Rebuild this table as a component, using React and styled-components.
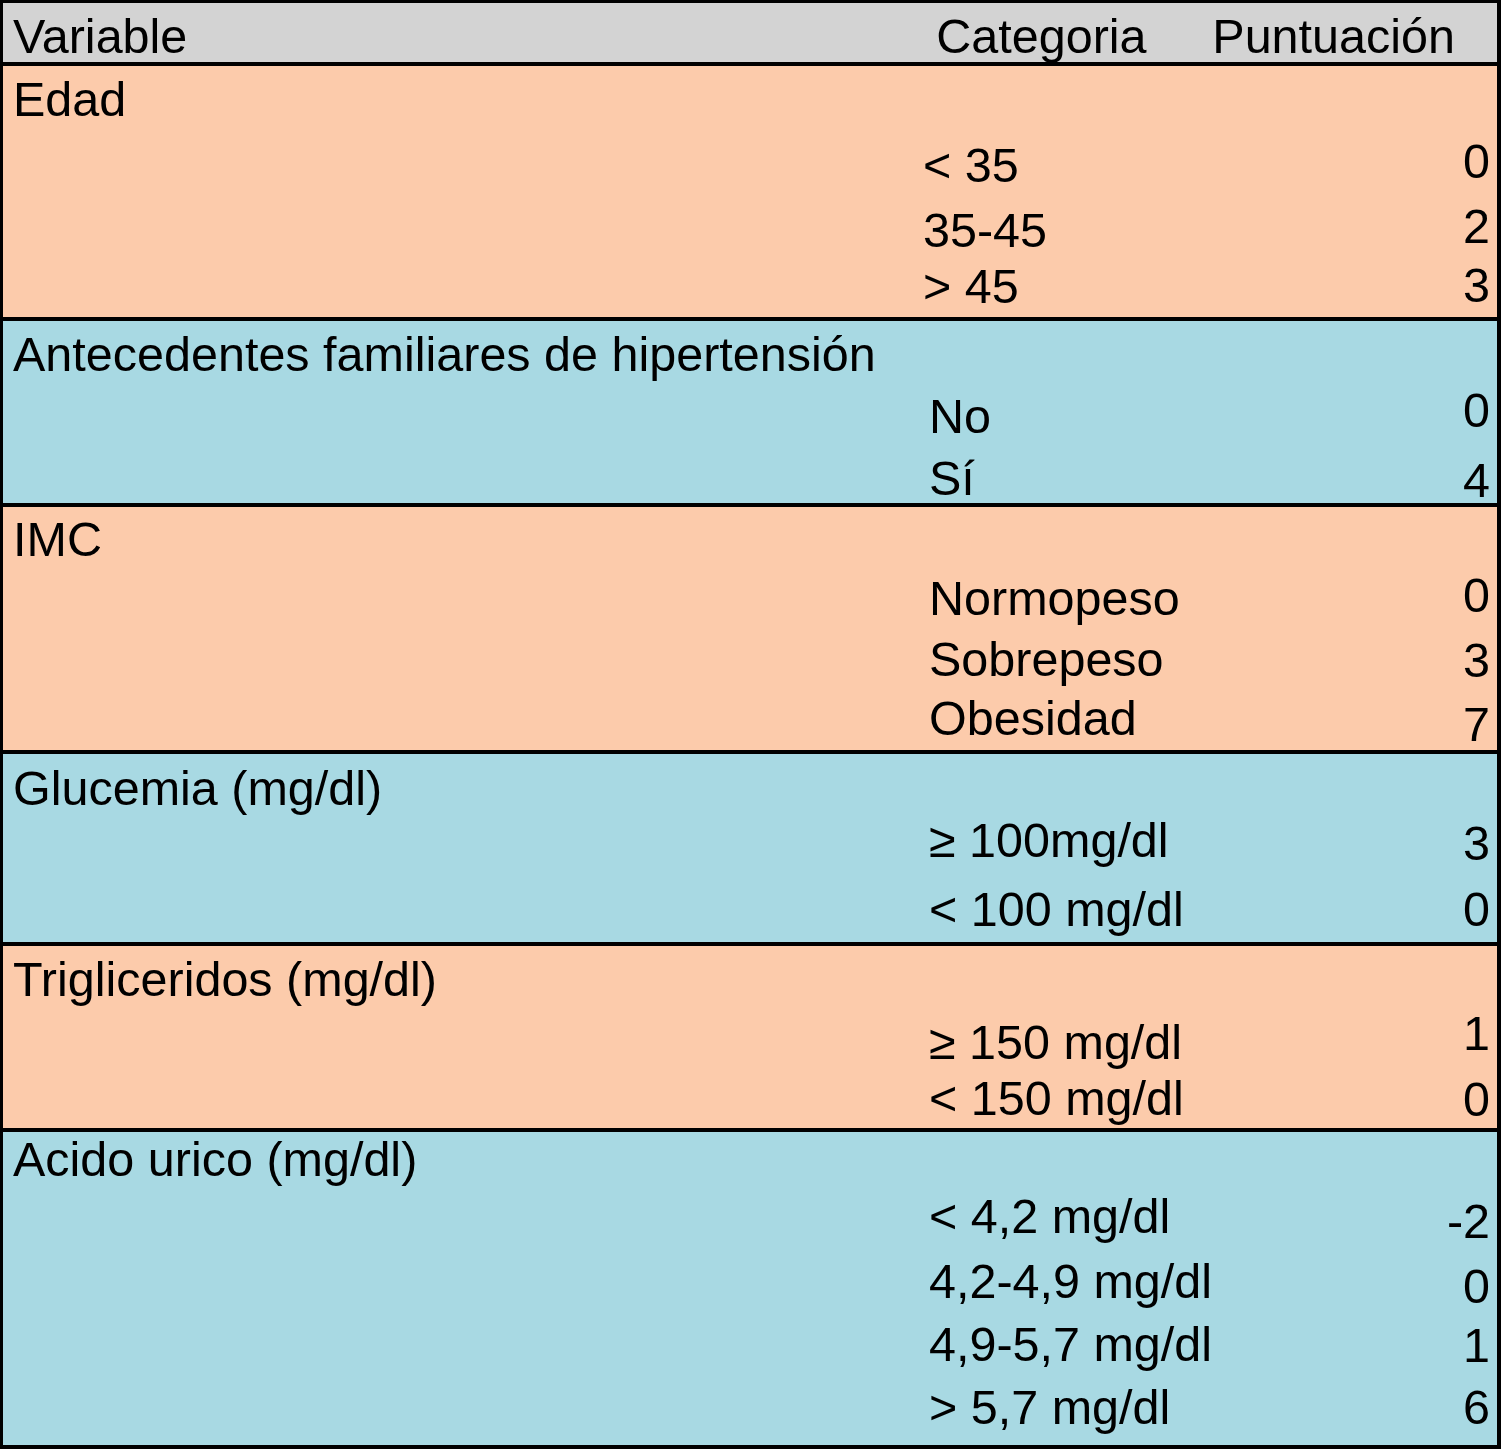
import React from 'react';
import styled, { createGlobalStyle } from 'styled-components';

const GlobalStyle = createGlobalStyle`
  html, body {
    margin: 0;
    padding: 0;
    background: #ffffff;
  }
  body {
    font-family: "Liberation Sans", Arial, Helvetica, sans-serif;
  }
`;

const PEACH = '#fccbab';
const BLUE = '#a8d9e3';

const Table = styled.div`
  width: 1501px;
  box-sizing: border-box;
  border: 4px solid #000;
  border-top-width: 3px;
  border-left-width: 3px;
  color: #000;
  font-size: 48.5px;
  line-height: 46px;
`;

const Header = styled.div`
  display: grid;
  grid-template-columns: 1fr 276px auto;
  height: 63px;
  box-sizing: border-box;
  padding: 10px 42px 0 10px;
  background: #d3d3d3;
  border-bottom: 4px solid #000;
`;

const HeadCell = styled.div`
  white-space: nowrap;
`;

const Section = styled.div`
  height: ${p => p.$height}px;
  background: ${p => p.$bg};
  border-bottom: ${p => (p.$last ? 'none' : '4px solid #000')};
  overflow: hidden;
  display: flex;
  flex-direction: column;
`;

const Title = styled.div`
  margin-top: ${p => p.$top}px;
  padding-left: 10px;
  height: 46px;
  white-space: nowrap;
`;

const Row = styled.div`
  display: flex;
  justify-content: space-between;
  align-items: flex-start;
  height: 46px;
  margin-top: ${p => p.$top}px;
  padding-left: ${p => p.$catX}px;
  padding-right: 7px;
`;

const Category = styled.span`
  white-space: nowrap;
`;

const Score = styled.span`
  margin-top: ${p => p.$shift}px;
`;

const BASE = 40;

const sections = [
  {
    name: 'Edad', bg: PEACH, height: 251, title: 50, catX: 920,
    rows: [['< 35', '0', 116, -4], ['35-45', '2', 181, -4], ['> 45', '3', 237, -1]],
  },
  {
    name: 'Antecedentes familiares de hipertensión', bg: BLUE, height: 182, title: 50, catX: 926,
    rows: [['No', '0', 112, -6], ['Sí', '4', 174, 2]],
  },
  {
    name: 'IMC', bg: PEACH, height: 243, title: 49, catX: 926,
    rows: [['Normopeso', '0', 108, -3], ['Sobrepeso', '3', 169, 1], ['Obesidad', '7', 228, 6]],
  },
  {
    name: 'Glucemia (mg/dl)', bg: BLUE, height: 188, title: 51, catX: 926,
    rows: [['≥ 100mg/dl', '3', 103, 3], ['< 100 mg/dl', '0', 172, 0]],
  },
  {
    name: 'Trigliceridos (mg/dl)', bg: PEACH, height: 182, title: 50, catX: 926,
    rows: [['≥ 150 mg/dl', '1', 113, -9], ['< 150 mg/dl', '0', 169, 1]],
  },
  {
    name: 'Acido urico (mg/dl)', bg: BLUE, height: 313, title: 44, catX: 926,
    rows: [
      ['< 4,2 mg/dl', '-2', 101, 5],
      ['4,2-4,9 mg/dl', '0', 166, 5],
      ['4,9-5,7 mg/dl', '1', 229, 1],
      ['> 5,7 mg/dl', '6', 292, 0],
    ],
  },
];

const App = () => (
  <>
    <GlobalStyle />
    <Table>
      <Header>
        <HeadCell>Variable</HeadCell>
        <HeadCell>Categoria</HeadCell>
        <HeadCell>Puntuación</HeadCell>
      </Header>
      {sections.map((s, i) => {
        let prev = s.title;
        return (
          <Section key={s.name} $bg={s.bg} $height={s.height} $last={i === sections.length - 1}>
            <Title $top={s.title - BASE}>{s.name}</Title>
            {s.rows.map(([cat, score, baseline, shift]) => {
              const top = baseline - prev - 46;
              prev = baseline;
              return (
                <Row key={cat} $top={top} $catX={s.catX}>
                  <Category>{cat}</Category>
                  <Score $shift={shift}>{score}</Score>
                </Row>
              );
            })}
          </Section>
        );
      })}
    </Table>
  </>
);

export default App;
